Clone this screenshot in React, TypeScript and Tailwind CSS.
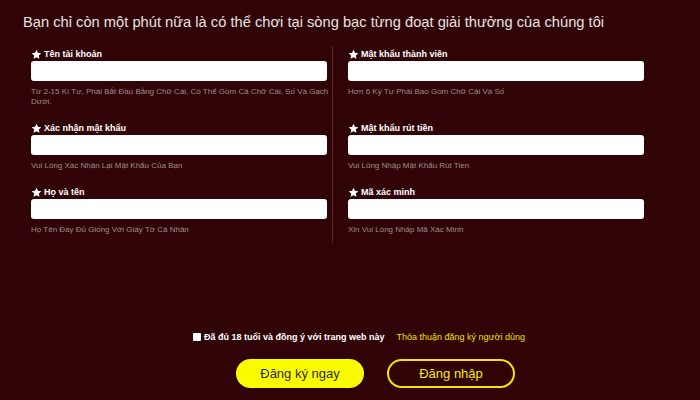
import { useState } from 'react'

type Field = {
  label: string
  hint: string
  type?: string
}

const rows: [Field, Field][] = [
  [
    { label: 'Tên tài khoản', hint: 'Từ 2-15 Kí Tự, Phải Bắt Đầu Bằng Chữ Cái, Có Thể Gồm Cả Chữ Cái, Số Và Gạch Dưới.' },
    { label: 'Mật khẩu thành viên', hint: 'Hơn 6 Ký Tự Phải Bao Gồm Chữ Cái Và Số', type: 'password' },
  ],
  [
    { label: 'Xác nhận mật khẩu', hint: 'Vui Lòng Xác Nhận Lại Mật Khẩu Của Bạn', type: 'password' },
    { label: 'Mật khẩu rút tiền', hint: 'Vui Lòng Nhập Mật Khẩu Rút Tiền', type: 'password' },
  ],
  [
    { label: 'Họ và tên', hint: 'Họ Tên Đầy Đủ Giống Với Giấy Tờ Cá Nhân' },
    { label: 'Mã xác minh', hint: 'Xin Vui Lòng Nhập Mã Xác Minh' },
  ],
]

function Star() {
  return (
    <svg viewBox="0 0 24 24" className="w-[11px] h-[11px] mr-[2px] shrink-0" fill="#ffffff">
      <path d="M12 1.5l3.2 6.7 7.3.9-5.4 5.1 1.4 7.3L12 17.9l-6.5 3.6 1.4-7.3-5.4-5.1 7.3-.9z" />
    </svg>
  )
}

function FieldCell({ field, side, last }: { field: Field; side: 'left' | 'right'; last: boolean }) {
  return (
    <div
      className={
        (side === 'left' ? 'pr-[6px] border-r border-[#5a2a2c] ' : 'pl-[15px] ') +
        (last ? 'pt-[3px] pb-[8px]' : 'pt-[3px] pb-[13px]')
      }
    >
      <div className="flex items-center h-[11px] text-[9px] leading-[11px] font-bold text-white">
        <Star />
        <span>{field.label}</span>
      </div>
      <input
        type={field.type ?? 'text'}
        className="mt-[1px] block w-[296px] h-[20px] bg-white rounded-[3px] outline-none px-2 text-[11px] text-black"
      />
      <div className="mt-[6px] w-[304px] text-[8px] leading-[10px] text-[#a08c8c]">{field.hint}</div>
    </div>
  )
}

export default function App() {
  const [agree, setAgree] = useState(false)

  return (
    <div
      className="w-[700px] h-[400px] bg-[#300306] overflow-hidden"
      style={{ fontFamily: '"Liberation Sans", Arial, sans-serif' }}
    >
      <div className="pt-[12px] pl-[23px] text-[14.7px] leading-[20px] text-[#e8e2e2]">
        Bạn chỉ còn một phút nữa là có thể chơi tại sòng bạc từng đoạt giải thưởng của chúng tôi
      </div>

      <div className="mt-[14px] pl-[31px] grid grid-cols-[302px_312px]">
        {rows.map((row, i) => (
          <div key={i} className="contents">
            <FieldCell field={row[0]} side="left" last={i === rows.length - 1} />
            <FieldCell field={row[1]} side="right" last={i === rows.length - 1} />
          </div>
        ))}
      </div>

      <div className="mt-[88px] pl-[193px] flex items-center h-[12px]">
        <button
          onClick={() => setAgree(a => !a)}
          className="w-[8px] h-[8px] bg-white rounded-[1px] shrink-0 flex items-center justify-center"
        >
          {agree && <span className="block w-[4px] h-[4px] bg-[#300306]" />}
        </button>
        <span className="ml-[3px] text-[9px] leading-[12px] font-bold text-white">
          Đã đủ 18 tuổi và đồng ý với trang web này
        </span>
        <span className="ml-[12px] text-[9px] leading-[12px] text-[#f0e000]">
          Thỏa thuận đăng ký người dùng
        </span>
      </div>

      <div className="mt-[16px] pl-[236px] flex gap-[23px]">
        <button className="w-[128px] h-[29px] rounded-full bg-[#fbfb00] text-[13px] text-[#2d2d2d]">
          Đăng ký ngay
        </button>
        <button className="w-[128px] h-[29px] rounded-full border-2 border-[#f2e400] text-[13px] text-[#f7ea00]">
          Đăng nhập
        </button>
      </div>
    </div>
  )
}
